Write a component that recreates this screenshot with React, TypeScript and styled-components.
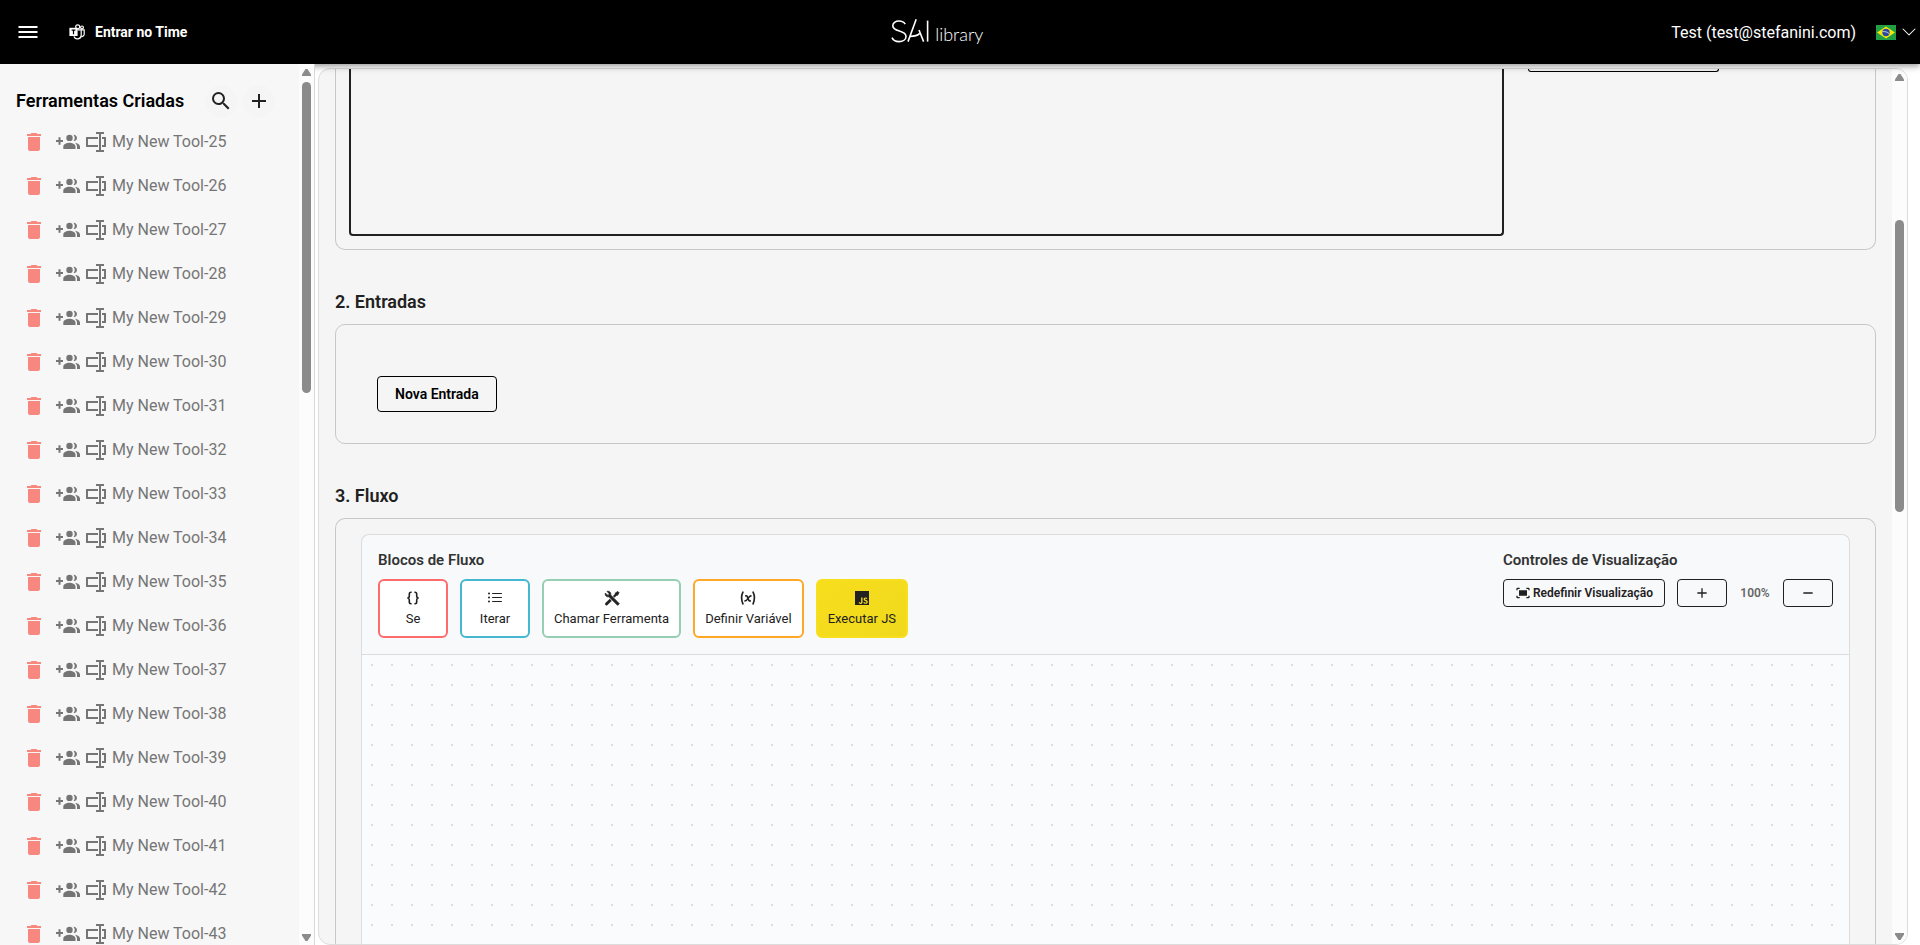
import React from "react";
import styled, { createGlobalStyle } from "styled-components";
import { MdAdd, MdDelete, MdFitScreen, MdRemove, MdSearch } from "react-icons/md";
import { BsChevronDown, BsListUl } from "react-icons/bs";
import { RiToolsFill } from "react-icons/ri";
import { TbVariable } from "react-icons/tb";
import { IoLogoJavascript } from "react-icons/io5";

const GlobalStyle = createGlobalStyle`
  *, *::before, *::after { box-sizing: border-box; }
  body {
    margin: 0;
    background: #fff;
    color: #212121;
    font-family: Roboto, "Liberation Sans", sans-serif;
    font-size: 16px;
  }
  button, textarea { font-family: inherit; margin: 0; }
  button { cursor: pointer; color: inherit; }
  svg { display: block; flex: none; }
`;

const Page = styled.div`
  display: flex;
  flex-direction: column;
  height: 100vh;
  overflow: hidden;
`;

/* ---------- top bar ---------- */

const TopBar = styled.header`
  position: relative;
  z-index: 1;
  flex: none;
  display: flex;
  justify-content: space-between;
  align-items: center;
  height: 64px;
  background: #000;
  color: #fff;
  box-shadow: 0 2px 4px -1px rgba(0, 0, 0, 0.2), 0 4px 5px 0 rgba(0, 0, 0, 0.14),
    0 1px 10px 0 rgba(0, 0, 0, 0.12);
`;

const TopBarSide = styled.div<{ $end?: boolean }>`
  display: flex;
  align-items: center;
  gap: ${(p) => (p.$end ? 20 : 29)}px;
  padding: ${(p) => (p.$end ? "0 3px 0 0" : "0 0 0 16px")};
`;

const BareButton = styled.button`
  display: flex;
  align-items: center;
  padding: 0;
  border: 0;
  background: none;
`;

const TeamButton = styled(BareButton)`
  gap: 10px;
  font-size: 14px;
  font-weight: 700;
  line-height: 20px;
`;

const LanguageButton = styled(BareButton)`
  gap: 5px;
`;

const Logo = styled.a`
  display: flex;
  align-items: flex-end;
  gap: 6px;
  height: 32px;
  padding-left: 16px;
  color: #fff;
  text-decoration: none;
`;

const LogoWord = styled.span`
  font-family: Lato, "Liberation Sans", sans-serif;
  font-size: 18px;
  font-weight: 300;
  line-height: 28px;
`;

/* ---------- body ---------- */

const Body = styled.div`
  flex: 1;
  min-height: 0;
  display: flex;
`;

const Sidebar = styled.aside`
  position: relative;
  z-index: 2;
  flex: none;
  display: flex;
  width: 315px;
  border-right: 1px solid #d8d8d8;
  background: #f7f7f7;
`;

const SidebarContent = styled.div`
  flex: 1;
  min-width: 0;
  overflow: hidden;
`;

const SidebarHeader = styled.div`
  display: flex;
  align-items: center;
  gap: 6px;
  padding: 21px 24px 3px 16px;
`;

const SidebarTitle = styled.h2`
  flex: none;
  width: 183px;
  margin: 0;
  color: #000;
  font-size: 18px;
  font-weight: 600;
  line-height: 32px;
`;

const RoundButton = styled(BareButton)`
  justify-content: center;
  width: 32px;
  height: 32px;
  border-radius: 50%;
  background: #f5f5f5;
`;

const ToolList = styled.ul`
  margin: 0;
  padding: 0;
  list-style: none;
`;

const ToolRow = styled.li`
  display: flex;
  align-items: center;
  gap: 6px;
  height: 44px;
  padding-left: 22px;
  color: #757575;
`;

const DeleteButton = styled(BareButton)`
  margin-right: 4px;
  color: #f8877f;
`;

const ToolLink = styled.a`
  color: inherit;
  text-decoration: none;
  line-height: 24px;
`;

/* ---------- scroll rail ---------- */

const Rail = styled.div`
  flex: none;
  display: flex;
  flex-direction: column;
  align-items: center;
  width: 15px;
  padding: 5px 0 4px;
  background: #fcfcfc;
`;

const RailTrack = styled.div<{ $before: number; $size: number; $after: number }>`
  flex: 1;
  display: grid;
  grid-template-rows: ${(p) => `${p.$before}fr ${p.$size}fr ${p.$after}fr`};
`;

const RailThumb = styled.div`
  grid-row: 2;
  width: 9px;
  border-radius: 5px;
  background: #8b8b8b;
`;

/* ---------- main panel ---------- */

const Main = styled.main`
  flex: 1;
  min-width: 0;
  display: flex;
  margin: 4px 12px 0 3px;
  border: 1px solid #dcdcdc;
  border-radius: 12px;
  background: #f5f5f5;
  overflow: hidden;
`;

const MainContent = styled.div`
  flex: 1;
  min-width: 0;
  display: flex;
  flex-direction: column;
  padding: 0 16px;
`;

const SectionTitle = styled.h2`
  flex: none;
  margin: 38px 0 8px;
  font-size: 18px;
  font-weight: 600;
  line-height: 28px;
`;

const Card = styled.section`
  border: 1px solid #c8c8c8;
  border-radius: 10px;
`;

const DescriptionCard = styled(Card)`
  display: flex;
  gap: 24px;
  padding: 0 13px 13px;
  border-top: 0;
  border-radius: 0 0 10px 10px;
`;

const DescriptionField = styled.textarea`
  flex: 1;
  min-width: 0;
  height: 167px;
  border: 2px solid #212121;
  border-top: 0;
  border-radius: 0 0 4px 4px;
  background: transparent;
  resize: none;
`;

const DescriptionSide = styled.div`
  width: 334px;
`;

const TailButton = styled(BareButton)`
  width: 191px;
  height: 3px;
  border: 1px solid #000;
  border-top: 0;
  border-radius: 0 0 4px 4px;
`;

const InputsCard = styled(Card)`
  padding: 51px 41px 31px;
`;

const NewInputButton = styled.button`
  display: block;
  height: 36px;
  padding: 0 17px;
  border: 1px solid #000;
  border-radius: 4px;
  background: transparent;
  color: #000;
  font-size: 14px;
  font-weight: 600;
`;

const FlowCard = styled(Card)`
  flex: 1;
  display: flex;
  padding: 15px 25px 0;
  border-bottom: 0;
  border-radius: 10px 10px 0 0;
`;

const FlowPanel = styled.div`
  flex: 1;
  min-width: 0;
  display: flex;
  flex-direction: column;
  border: 1px solid #ddd;
  border-bottom: 0;
  border-radius: 8px 8px 0 0;
  background: #f8f9fb;
  overflow: hidden;
`;

const FlowToolbar = styled.div`
  display: flex;
  justify-content: space-between;
  padding: 16px;
  border-bottom: 1px solid #ddd;
`;

const GroupTitle = styled.h3`
  margin: 0 0 10px;
  color: #333;
  font-size: 15px;
  font-weight: 600;
  line-height: 18px;
`;

const ButtonRow = styled.div`
  display: flex;
  align-items: center;
  gap: 12px;
`;

const BlockButton = styled.button<{ $border: string; $fill?: string }>`
  display: flex;
  flex-direction: column;
  align-items: center;
  gap: 4px;
  min-width: 70px;
  padding: 9px 10px;
  border: 2px solid ${(p) => p.$border};
  border-radius: 6px;
  background: ${(p) => p.$fill ?? "#fff"};
  background-origin: border-box;
  font-size: 13px;
  line-height: 17px;
  white-space: nowrap;
`;

const ViewButton = styled.button`
  display: flex;
  align-items: center;
  justify-content: center;
  gap: 2px;
  min-width: 50px;
  height: 28px;
  padding: 0 11px;
  border: 1px solid #212121;
  border-radius: 4px;
  background: transparent;
  font-size: 12px;
  font-weight: 600;
`;

const ZoomLevel = styled.output`
  width: 32px;
  color: #666;
  font-size: 12px;
  font-weight: 600;
  line-height: 16px;
  text-align: center;
`;

const FlowCanvas = styled.div`
  flex: 1;
  background: #fafbfd radial-gradient(circle, #ddd 1px, transparent 1px) 0 0 / 20px 20px;
`;

/* ---------- icons ---------- */

const MenuIcon = () => (
  <svg width="24" height="24" viewBox="0 0 24 24" fill="#fff">
    <path d="M2.5 6h19v2h-19zM2.5 11h19v2h-19zM2.5 16h19v2h-19z" />
  </svg>
);

const TeamsIcon = () => (
  <svg width="16" height="16" viewBox="0 0 16 16" fill="none" stroke="#fff" strokeWidth="1.2">
    <circle cx="8.7" cy="2.8" r="2" />
    <circle cx="13" cy="3.4" r="1.4" />
    <path d="M8.5 5.8h3.7v5.4a3.7 3.7 0 0 1-7.2 1.2" />
    <path d="M12.2 5.8h3v4.4a2.5 2.5 0 0 1-3 2.3" />
    <path d="M0.4 3.8h8.2v8.2h-8.2z" fill="#fff" stroke="none" />
    <path d="M2.6 6.1h3.8M4.5 6.1v4.2" stroke="#000" />
  </svg>
);

const LogoMark = () => (
  <svg width="38" height="32" viewBox="0 0 38 32" fill="none" stroke="#fff" strokeWidth="1.6">
    <path d="M14.2 8.2C13 6 10.6 5 8 5c-3.6 0-6.2 1.9-6.2 4.8 0 6.8 13.2 3.8 13.2 10.6 0 3.2-3.1 5.2-6.900 5.200-3.400 0-6-1.400-7.100-4" />
    <path d="M17 25.6 25.2 3.2" />
    <path d="M19 20.400c4.400 0 7.600-.8 9.800-3" />
    <path d="M28 14l4.600 11.600" />
    <path d="M36.6 4.6v21" />
  </svg>
);

const BrazilFlag = () => (
  <svg width="20" height="15" viewBox="0 0 20 15">
    <path fill="#229e45" d="M0 0h20v15H0z" />
    <path fill="#f8e509" d="M10 1.5 19 7.5 10 13.5 1 7.5z" />
    <circle cx="10" cy="7.5" r="3.7" fill="#2b49a3" />
    <path d="M6.6 6.6c2.4-.3 4.9.4 6.6 2.2" stroke="#ffffef" strokeWidth=".7" fill="none" />
  </svg>
);

const ShareIcon = () => (
  <svg width="24" height="20" viewBox="0 0 24 20" fill="currentColor">
    <path d="M0 8h2.5V5.300h2V8H7v2H4.500v2.700h-2V10H0z" />
    <circle cx="13.5" cy="5.9" r="3.2" />
    <path d="M17.3 2.7c2.4 0 3.7 1.5 3.7 3.2s-1.4 3.2-3.7 3.2c1-1 1.4-2 1.4-3.2s-.5-2.3-1.400-3.200z" />
    <path d="M7.3 17v-2.400c0-2.600 3.700-3.800 6.100-3.800s6.100 1.200 6.100 3.800V17z" />
    <path d="M18.8 10.7c3 .5 5.2 1.7 5.2 3.9V17h-3v-2.400c0-1.600-.8-2.900-2.200-3.900z" />
  </svg>
);

const RenameIcon = () => (
  <svg width="20" height="20" viewBox="0 0 20 20" fill="none" stroke="currentColor" strokeWidth="2">
    <path d="M12 6H1v8h11" />
    <path d="M16 6h3v8h-3" />
    <path d="M10 1h3.500l.5.500.5-.5H18M10 19h3.500l.5-.5.5.500H18M14 1v18" />
  </svg>
);

const BracesIcon = () => (
  <svg width="16" height="16" viewBox="0 0 16 16" fill="none" stroke="currentColor" strokeWidth="1.6">
    <path d="M6.600 2.300H6c-1.200 0-1.700.6-1.700 1.700v2c0 1.300-.6 2-2 2 1.400 0 2 .7 2 2v2c0 1.100.5 1.700 1.700 1.700h.6" />
    <path d="M9.400 2.300h.6c1.200 0 1.700.6 1.700 1.700v2c0 1.300.6 2 2 2-1.400 0-2 .7-2 2v2c0 1.100-.5 1.700-1.700 1.700h-.6" />
  </svg>
);

const ToolsIcon = styled(RiToolsFill).attrs({ viewBox: "1.5 1.5 20 20" })`
  stroke: currentColor;
  stroke-width: 1;
  overflow: visible;
`;

const VariableIcon = styled(TbVariable).attrs({ viewBox: "1 1 22 22" })`
  stroke-width: 2.3;
`;

const Arrow = ({ down }: { down?: boolean }) => (
  <svg width="9" height="7" viewBox="0 0 9 7" fill="#8b8b8b">
    <path d={down ? "M0 0h9v1.500L5.500 7h-2L0 1.500z" : "M0 7h9V5.500L5.500 0h-2L0 5.500z"} />
  </svg>
);

type ScrollRailProps = { before: number; size: number; after: number };

const ScrollRail = ({ before, size, after }: ScrollRailProps) => (
  <Rail aria-hidden="true">
    <Arrow />
    <RailTrack $before={before} $size={size} $after={after}>
      <RailThumb />
    </RailTrack>
    <Arrow down />
  </Rail>
);

/* ---------- data ---------- */

const tools = Array.from({ length: 19 }, (_, i) => `My New Tool-${i + 25}`);

const blocks = [
  { label: "Se", icon: <BracesIcon />, border: "#ff6b6b" },
  { label: "Iterar", icon: <BsListUl size={16} />, border: "#45b7d1" },
  { label: "Chamar Ferramenta", icon: <ToolsIcon size={16} />, border: "#96ceb4" },
  { label: "Definir Variável", icon: <VariableIcon size={16} />, border: "#ffa726" },
  {
    label: "Executar JS",
    icon: <IoLogoJavascript size={16} />,
    border: "#f7df1e",
    fill: "linear-gradient(135deg, #f7df1e, #f0d81c)",
  },
];

export default function App() {
  return (
    <Page>
      <GlobalStyle />
      <TopBar>
        <TopBarSide>
          <BareButton aria-label="Menu">
            <MenuIcon />
          </BareButton>
          <TeamButton>
            <TeamsIcon />
            Entrar no Time
          </TeamButton>
        </TopBarSide>
        <Logo href="#" aria-label="SAI library">
          <LogoMark />
          <LogoWord>library</LogoWord>
        </Logo>
        <TopBarSide $end>
          <span>Test (test@stefanini.com)</span>
          <LanguageButton aria-label="Idioma">
            <BrazilFlag />
            <BsChevronDown size={16} />
          </LanguageButton>
        </TopBarSide>
      </TopBar>

      <Body>
        <Sidebar>
          <SidebarContent>
            <SidebarHeader>
              <SidebarTitle>Ferramentas Criadas</SidebarTitle>
              <RoundButton aria-label="Pesquisar">
                <MdSearch size={24} />
              </RoundButton>
              <RoundButton aria-label="Adicionar">
                <MdAdd size={24} />
              </RoundButton>
            </SidebarHeader>
            <ToolList>
              {tools.map((name) => (
                <ToolRow key={name}>
                  <DeleteButton aria-label={`Excluir ${name}`}>
                    <MdDelete size={24} />
                  </DeleteButton>
                  <BareButton aria-label={`Compartilhar ${name}`}>
                    <ShareIcon />
                  </BareButton>
                  <BareButton aria-label={`Renomear ${name}`}>
                    <RenameIcon />
                  </BareButton>
                  <ToolLink href="#">{name}</ToolLink>
                </ToolRow>
              ))}
            </ToolList>
          </SidebarContent>
          <ScrollRail before={6} size={311} after={541} />
        </Sidebar>

        <Main>
          <MainContent>
            <DescriptionCard>
              <DescriptionField aria-label="Descrição" />
              <DescriptionSide>
                <TailButton aria-label="Gerar" />
              </DescriptionSide>
            </DescriptionCard>

            <SectionTitle>2. Entradas</SectionTitle>
            <InputsCard>
              <NewInputButton>Nova Entrada</NewInputButton>
            </InputsCard>

            <SectionTitle>3. Fluxo</SectionTitle>
            <FlowCard>
              <FlowPanel>
                <FlowToolbar>
                  <div>
                    <GroupTitle>Blocos de Fluxo</GroupTitle>
                    <ButtonRow>
                      {blocks.map((b) => (
                        <BlockButton key={b.label} $border={b.border} $fill={b.fill}>
                          {b.icon}
                          {b.label}
                        </BlockButton>
                      ))}
                    </ButtonRow>
                  </div>
                  <div>
                    <GroupTitle>Controles de Visualização</GroupTitle>
                    <ButtonRow>
                      <ViewButton>
                        <MdFitScreen size={16} />
                        Redefinir Visualização
                      </ViewButton>
                      <ViewButton aria-label="Aumentar zoom">
                        <MdAdd size={16} />
                      </ViewButton>
                      <ZoomLevel>100%</ZoomLevel>
                      <ViewButton aria-label="Diminuir zoom">
                        <MdRemove size={16} />
                      </ViewButton>
                    </ButtonRow>
                  </div>
                </FlowToolbar>
                <FlowCanvas />
              </FlowPanel>
            </FlowCard>
          </MainContent>
          <ScrollRail before={139} size={292} after={421} />
        </Main>
      </Body>
    </Page>
  );
}
